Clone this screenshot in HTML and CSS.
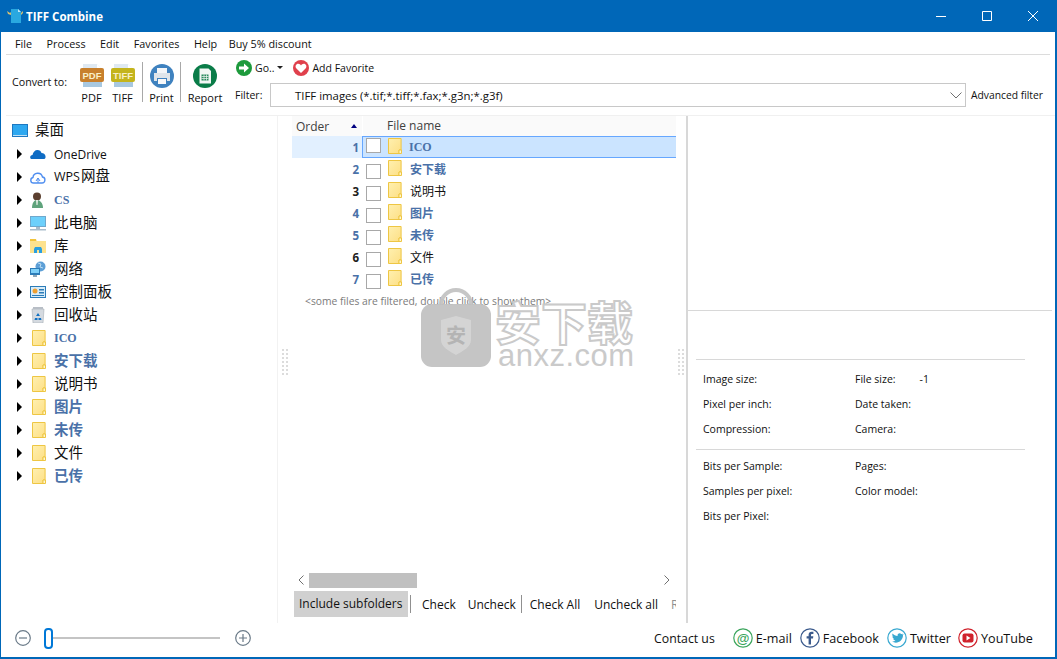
FILE: index.html
```html
<!DOCTYPE html>
<html lang="en">
<head>
<meta charset="utf-8">
<title>TIFF Combine</title>
<link rel="stylesheet" href="styles.css">
</head>
<body>
<svg class="defs" width="0" height="0" aria-hidden="true">
  <defs>
    <linearGradient id="fold" x1="0" y1="0" x2="1" y2="1"><stop offset="0" stop-color="#fff0b0"/><stop offset="1" stop-color="#fddf85"/></linearGradient>
    <symbol id="i-folder" viewBox="0 0 14 16"><path d="M.5.5h12.600v11.500h-2v3.500H.5z" fill="url(#fold)" stroke="#eec643"/><path d="M11 15.500V12h2.500v3.500z" fill="#fff6d0" stroke="#eec643"/></symbol>
    <symbol id="i-page" viewBox="0 0 24 24"><path d="M3 0h14l5 5v18H3z" fill="#dfe9f2"/><path d="M17 0l5 5h-5z" fill="#fff"/><path d="M3 18h19v5H3z" fill="#a8c8e0"/></symbol>
  </defs>
</svg>
<div class="app">
  <header class="titlebar">
    <svg class="app-icon" width="16" height="16" viewBox="0 0 16 16"><path d="M4 1h7l3 3v11H4z" fill="#29a8e0"/><path d="M0 3l3 2 1-1v3L1 6zM16 3l-2 2v2l2-2z" fill="#d8c070"/><path d="M11 1l3 3h-3z" fill="#bfe6f7"/></svg>
    <span class="app-title">TIFF Combine</span>
    <div class="win-controls">
      <svg class="win-btn" width="10" height="10" viewBox="0 0 10 10"><path d="M0 5.500h10" stroke="#fff"/></svg>
      <svg class="win-btn" width="10" height="10" viewBox="0 0 10 10"><path d="M.5.500h9v9h-9z" fill="none" stroke="#fff"/></svg>
      <svg class="win-btn" width="10" height="10" viewBox="0 0 10 10"><path d="M0 0l10 10M10 0L0 10" stroke="#fff"/></svg>
    </div>
  </header>

  <nav class="menubar">
    <span>File</span><span>Process</span><span>Edit</span><span>Favorites</span><span>Help</span><span class="menu-buy">Buy 5% discount</span>
  </nav>

  <section class="toolbar">
    <span class="convert-label">Convert to:</span>
    <div class="tool">
      <svg width="24" height="24" viewBox="0 0 24 24"><use href="#i-page"/><rect y="4" width="24" height="14" rx="2" fill="#c8802c"/><text x="12" y="14.500" class="svg-label">PDF</text></svg>
      <span>PDF</span>
    </div>
    <div class="tool">
      <svg width="24" height="24" viewBox="0 0 24 24"><use href="#i-page"/><rect y="4" width="24" height="14" rx="2" fill="#c4b41c"/><text x="12" y="14.500" class="svg-label">TIFF</text></svg>
      <span>TIFF</span>
    </div>
    <i class="vsep"></i>
    <div class="tool tool-print">
      <svg width="24" height="24" viewBox="0 0 24 24"><circle cx="12" cy="12" r="12" fill="#3f82bf"/><path d="M7 4h10v5H7z" fill="#f4f6f8"/><path d="M4 9h16v8h-3v-3H7v3H4z" fill="#dfe5ea"/><path d="M8 15h8v5H8z" fill="#f8f9fa"/></svg>
      <span>Print</span>
    </div>
    <i class="vsep"></i>
    <div class="tool tool-report">
      <svg width="24" height="24" viewBox="0 0 24 24"><circle cx="12" cy="12" r="12" fill="#0a7c48"/><path d="M6.500 4.500h9l2.500 2.500v12.500H6.500z" fill="#f2f7f4"/><path d="M8.500 10.500h7v6h-7z" fill="#2b8a5e"/><path d="M8.500 12.500h7M8.500 14.500h7M11 10.500v6M13.500 10.500v6" stroke="#f2f7f4" stroke-width=".7"/></svg>
      <span>Report</span>
    </div>
    <div class="tool-right">
      <div class="quick-row">
        <svg width="16" height="16" viewBox="0 0 16 16"><circle cx="8" cy="8" r="8" fill="#1d9a3c"/><path d="M3 6.500h5V3.500l5 4.500-5 4.500V9.500H3z" fill="#fff"/></svg>
        <span class="go-text">Go..</span>
        <i class="caret-down"></i>
        <svg class="fav-icon" width="16" height="16" viewBox="0 0 16 16"><circle cx="8" cy="8" r="8" fill="#e0404c"/><path d="M8 13L3.200 8.200C1.800 6.500 3 3.800 5.200 3.800c1.300 0 2.200.8 2.800 1.800.6-1 1.500-1.800 2.800-1.800 2.200 0 3.400 2.700 2 4.400z" fill="#fff"/></svg>
        <span>Add Favorite</span>
      </div>
      <div class="filter-row">
        <span class="filter-label">Filter:</span>
        <div class="combo">
          <span>TIFF images (*.tif;*.tiff;*.fax;*.g3n;*.g3f)</span>
          <svg width="12" height="7" viewBox="0 0 12 7"><path d="M.5.500L6 6l5.500-5.500" fill="none" stroke="#707070"/></svg>
        </div>
        <span class="adv">Advanced filter</span>
      </div>
    </div>
  </section>

  <main class="main">
    <aside class="tree">
      <div class="tree-root">
        <svg width="16" height="13" viewBox="0 0 16 13"><path d="M0 0h16v13H0z" fill="#1d78c1"/><path d="M1 1h14v10H1z" fill="#2ea8f0"/><path d="M1 11h14v1H1z" fill="#bfe0f5"/></svg>
        <span class="t-cjk">桌面</span>
      </div>
      <div class="tree-row"><i class="caret"></i>
        <svg width="16" height="16" viewBox="0 0 16 16"><path d="M1 13c-1.500-1-1-4 1.500-4C3 6 5 4 7.500 4c2 0 3.500 1 4 3 2.500 0 4.500 2 4 4.500-.2 1-1 1.500-2 1.500z" fill="#0f6cc4"/></svg>
        <span class="t-lat">OneDrive</span></div>
      <div class="tree-row"><i class="caret"></i>
        <svg width="16" height="16" viewBox="0 0 16 16"><path d="M3.500 14C0 14 0 9 3 8.500 3.500 3.500 11 2.500 12.500 8c3.500.5 3 6-.5 6z" fill="none" stroke="#4f8ef0" stroke-width="1.400"/><path d="M8 9v5M6 12l2-3 2 3" fill="none" stroke="#4f8ef0"/></svg>
        <span class="t-cjk"><b class="t-wps">WPS</b>网盘</span></div>
      <div class="tree-row"><i class="caret"></i>
        <svg width="16" height="16" viewBox="0 0 16 16"><circle cx="7" cy="4.500" r="4" fill="#5c4030"/><path d="M2 16c0-5 2-8 5-8s6 3 6 8z" fill="#5fa37c"/><path d="M6 8h2l-.5 5h-1z" fill="#e8f0e8"/></svg>
        <span class="t-serif">CS</span></div>
      <div class="tree-row"><i class="caret"></i>
        <svg width="16" height="16" viewBox="0 0 16 16"><path d="M0 1h16v11H0z" fill="#6fa8cc"/><path d="M1 2h14v9H1z" fill="#6dd0fb"/><path d="M6 12h4v2H6z" fill="#a8bccb"/><path d="M0 14h16v1.500H0z" fill="#a8bccb"/></svg>
        <span class="t-cjk">此电脑</span></div>
      <div class="tree-row"><i class="caret"></i>
        <svg width="16" height="16" viewBox="0 0 16 16"><path d="M0 1h6l1 2h9v12H0z" fill="#fde28e"/><path d="M0 1h6v2H0z" fill="#f2c43c"/><path d="M5 9h6l1 2v4H9v-3H7v3H4v-4z" fill="#2a9fe0"/></svg>
        <span class="t-cjk">库</span></div>
      <div class="tree-row"><i class="caret"></i>
        <svg width="16" height="16" viewBox="0 0 16 16"><circle cx="10.500" cy="5.500" r="5" fill="#5d9fd6"/><path d="M8 2l3 1-1 3 3 1" fill="none" stroke="#bcdcf2"/><path d="M0 7h10v7H0z" fill="#2c7cb8"/><path d="M1 8h8v4H1z" fill="#7fd0f8"/><path d="M3 14h4v2H3z" fill="#90a8b8"/></svg>
        <span class="t-cjk">网络</span></div>
      <div class="tree-row"><i class="caret"></i>
        <svg width="16" height="16" viewBox="0 0 16 16"><path d="M0 2h16v12H0z" fill="#2c7cb8"/><path d="M1 3h14v10H1z" fill="#d8ecf8"/><circle cx="5" cy="7" r="2.500" fill="#f0a030"/><path d="M9 5h5v1.500H9zM9 8h5v1.500H9zM2 11h12v1H2z" fill="#2c7cb8"/></svg>
        <span class="t-cjk">控制面板</span></div>
      <div class="tree-row"><i class="caret"></i>
        <svg width="16" height="16" viewBox="0 0 16 16"><path d="M2 2h12l-1 14H3z" fill="#d5dae0" stroke="#a8aeb6" stroke-width=".6"/><path d="M3 0h10v2H3z" fill="#b8bec6"/><path d="M8 6l2 3H6zM5 11h2.500v2H4.500zM11 11H8.500v2h3z" fill="#1272c4"/></svg>
        <span class="t-cjk">回收站</span></div>
      <div class="tree-row"><i class="caret"></i><svg class="fold" width="14" height="16"><use href="#i-folder"/></svg><span class="t-serif">ICO</span></div>
      <div class="tree-row"><i class="caret"></i><svg class="fold" width="14" height="16"><use href="#i-folder"/></svg><span class="t-cjk t-bold">安下载</span></div>
      <div class="tree-row"><i class="caret"></i><svg class="fold" width="14" height="16"><use href="#i-folder"/></svg><span class="t-cjk">说明书</span></div>
      <div class="tree-row"><i class="caret"></i><svg class="fold" width="14" height="16"><use href="#i-folder"/></svg><span class="t-cjk t-bold">图片</span></div>
      <div class="tree-row"><i class="caret"></i><svg class="fold" width="14" height="16"><use href="#i-folder"/></svg><span class="t-cjk t-bold">未传</span></div>
      <div class="tree-row"><i class="caret"></i><svg class="fold" width="14" height="16"><use href="#i-folder"/></svg><span class="t-cjk">文件</span></div>
      <div class="tree-row"><i class="caret"></i><svg class="fold" width="14" height="16"><use href="#i-folder"/></svg><span class="t-cjk t-bold">已传</span></div>
    </aside>

    <div class="splitter"><i></i></div>

    <section class="list">
      <div class="list-head">
        <div class="head-order"><span>Order</span><i class="sort-up"></i></div>
        <div class="head-name">File name</div>
      </div>
      <div class="list-body">
        <div class="file-row selected">
          <div class="num blue">1</div>
          <div class="cell"><i class="check"></i><svg class="fold" width="14" height="16"><use href="#i-folder"/></svg><span class="name-serif">ICO</span></div>
        </div>
        <div class="file-row"><div class="num blue">2</div><div class="cell"><i class="check"></i><svg class="fold" width="14" height="16"><use href="#i-folder"/></svg><span class="name blue">安下载</span></div></div>
        <div class="file-row"><div class="num">3</div><div class="cell"><i class="check"></i><svg class="fold" width="14" height="16"><use href="#i-folder"/></svg><span class="name plain">说明书</span></div></div>
        <div class="file-row"><div class="num blue">4</div><div class="cell"><i class="check"></i><svg class="fold" width="14" height="16"><use href="#i-folder"/></svg><span class="name blue">图片</span></div></div>
        <div class="file-row"><div class="num blue">5</div><div class="cell"><i class="check"></i><svg class="fold" width="14" height="16"><use href="#i-folder"/></svg><span class="name blue">未传</span></div></div>
        <div class="file-row"><div class="num">6</div><div class="cell"><i class="check"></i><svg class="fold" width="14" height="16"><use href="#i-folder"/></svg><span class="name plain">文件</span></div></div>
        <div class="file-row"><div class="num blue">7</div><div class="cell"><i class="check"></i><svg class="fold" width="14" height="16"><use href="#i-folder"/></svg><span class="name blue">已传</span></div></div>
        <p class="note">&lt;some files are filtered, double click to show them&gt;</p>
      </div>
      <div class="hscroll">
        <svg width="6" height="10" viewBox="0 0 6 10"><path d="M5.500.5L1 5l4.500 4.500" fill="none" stroke="#707070"/></svg>
        <div class="thumb"></div>
        <svg class="arrow-r" width="6" height="10" viewBox="0 0 6 10"><path d="M.5.500L5 5 .5 9.500" fill="none" stroke="#707070"/></svg>
      </div>
      <div class="list-tools">
        <span class="toggle">Include subfolders</span>
        <i class="tsep"></i>
        <span class="lt-check">Check</span>
        <span class="lt-uncheck">Uncheck</span>
        <i class="tsep"></i>
        <span class="lt-all">Check All</span>
        <span class="lt-unall">Uncheck all</span>
        <span class="lt-cut">Refresh</span>
      </div>
    </section>

    <div class="splitter splitter-right"><i></i></div>

    <aside class="details">
      <div class="preview"></div>
      <div class="info">
        <div class="info-grid info-a">
          <span>Image size:</span><span>File size:<b class="val">-1</b></span>
          <span>Pixel per inch:</span><span>Date taken:</span>
          <span>Compression:</span><span>Camera:</span>
        </div>
        <div class="info-grid info-b">
          <span>Bits per Sample:</span><span>Pages:</span>
          <span>Samples per pixel:</span><span>Color model:</span>
          <span>Bits per Pixel:</span><span></span>
        </div>
      </div>
    </aside>
  </main>

  <footer class="footer">
    <svg class="zoom-minus" width="16" height="16" viewBox="0 0 16 16"><circle cx="8" cy="8" r="7.300" fill="none" stroke="#6a7a88" stroke-width="1.200"/><path d="M4 8h8" stroke="#6a7a88" stroke-width="1.200"/></svg>
    <div class="slider"><i class="knob"></i></div>
    <svg class="zoom-plus" width="16" height="16" viewBox="0 0 16 16"><circle cx="8" cy="8" r="7.300" fill="none" stroke="#6a7a88" stroke-width="1.200"/><path d="M4 8h8M8 4v8" stroke="#6a7a88" stroke-width="1.200"/></svg>
    <span class="contact">Contact us</span>
    <svg class="soc soc-mail" width="20" height="20" viewBox="0 0 20 20"><circle cx="10" cy="10" r="9.200" fill="#fff" stroke="#3ba55c" stroke-width="1.200"/><text x="10" y="14.500" class="svg-at">@</text></svg>
    <span class="soc-text t-mail">E-mail</span>
    <svg class="soc" width="20" height="20" viewBox="0 0 20 20"><circle cx="10" cy="10" r="9.200" fill="#fff" stroke="#3b5a8c" stroke-width="1.200"/><path d="M11 16.500V10.500h2l.3-2.300H11V7c0-.7.2-1.100 1.200-1.100h1.200V3.800c-.3 0-1-.1-1.800-.1-1.800 0-3 1.100-3 3.100v1.400H6.600v2.300h2v6z" fill="#3b5a8c"/></svg>
    <span class="soc-text t-fb">Facebook</span>
    <svg class="soc" width="20" height="20" viewBox="0 0 20 20"><circle cx="10" cy="10" r="9.200" fill="#fff" stroke="#38a8d0" stroke-width="1.200"/><path d="M16 6.300c-.5.200-.9.300-1.400.4.500-.3.900-.8 1.100-1.300-.5.300-1 .5-1.500.6-1.400-1.500-4.100-.3-3.600 1.900-2-.1-3.800-1-5-2.500-.6 1.100-.3 2.500.8 3.200-.4 0-.8-.1-1.100-.3 0 1.200.8 2.200 2 2.500-.4.100-.7.100-1.100 0 .3 1 1.200 1.700 2.300 1.700-1 .8-2.300 1.200-3.500 1 4.800 3 11.200-.2 11-6.700.4-.1.700-.3 1-.5z" fill="#38a8d0"/></svg>
    <span class="soc-text t-tw">Twitter</span>
    <svg class="soc" width="20" height="20" viewBox="0 0 20 20"><circle cx="10" cy="10" r="9.200" fill="#fff" stroke="#d0222c" stroke-width="1.200"/><rect x="4.500" y="5.500" width="11" height="9" rx="2" fill="#d0222c"/><path d="M8.500 7.500v5l4-2.500z" fill="#fff"/></svg>
    <span class="soc-text">YouTube</span>
  </footer>

  <div class="watermark" aria-hidden="true">
    <svg width="72" height="80" viewBox="0 0 72 80"><path d="M21 20V17a15 15 0 0 1 30 0v3" fill="none" stroke="#c4c4c4" stroke-width="4"/><rect x="1" y="16" width="70" height="63" rx="11" fill="#c2c2c2"/><path d="M21 32l15-4 15 4v20c0 7-8 11-15 15-7-4-15-8-15-15z" fill="#d2d2d2"/><text x="36" y="55" class="wm-shield">安</text></svg>
    <div class="wm-text">
      <span class="wm-cjk">安下载</span>
      <span class="wm-lat">anxz.com</span>
    </div>
  </div>
</div>
</body>
</html>
```

FILE: styles.css
```css
* { box-sizing: border-box; }
html, body { margin: 0; padding: 0; height: 100%; overflow: hidden; }
body { font-family: "Open Sans", "Noto Sans CJK SC", sans-serif; font-size: 12px; color: #101010; background: #fff; }
i { display: block; font-style: normal; }
svg { display: block; flex: none; }
.defs { position: absolute; }

.app { position: relative; width: 1057px; height: 659px; display: flex; flex-direction: column; border: solid #0067b8; border-width: 0 2px 2px 1px; background: #fff; }

.titlebar { height: 32px; flex: none; margin: 0 -2px 0 -1px; padding-left: 7px; background: #0067b8; color: #fff; display: flex; align-items: center; }
.app-title { margin-left: 3px; font-weight: 700; font-size: 11.500px; }
.win-controls { margin-left: auto; display: flex; gap: 36px; padding-right: 19px; }

.menubar { height: 23px; flex: none; margin: 0 5px; padding-left: 9px; display: flex; align-items: center; gap: 14.500px; font-size: 10.800px; border-bottom: 1px solid #dcdcdc; }
.menu-buy { margin-left: -3px; }

.toolbar { height: 61px; flex: none; display: flex; border-bottom: 1px solid #f0f0f0; margin-left: 5px; padding-left: 6px; }
.convert-label { width: 64px; align-self: center; font-size: 10.700px; margin-bottom: 7px; }
.tool { width: 31px; display: flex; flex-direction: column; align-items: center; padding-top: 9px; font-size: 11px; gap: 2px; }
.tool-print { margin-left: 1px; width: 29px; }
.tool-report { margin-left: 2px; width: 38px; }
.svg-label { font: 700 9.500px "Liberation Sans", sans-serif; fill: #f8efc8; text-anchor: middle; }
.vsep { width: 1px; height: 40px; background: #a8a8a8; margin: 7px 3px 0 4px; }
.tool-right { flex: 1; margin-left: 11px; display: flex; flex-direction: column; min-width: 0; font-size: 10.500px; }
.quick-row { height: 28px; display: flex; align-items: center; padding: 0 0 3px 1px; }
.go-text { margin-left: 3px; }
.caret-down { width: 0; height: 0; margin-left: 3px; border: 3px solid transparent; border-top: 3px solid #202020; border-bottom: 0; }
.fav-icon { margin: 0 3px 0 10px; }
.filter-row { display: flex; align-items: center; }
.filter-label { width: 35px; }
.combo { width: 696px; height: 24px; border: 1px solid #c8c8c8; display: flex; align-items: center; justify-content: space-between; padding: 0 3px 0 24px; font-size: 11.400px; }
.adv { margin-left: 5px; white-space: nowrap; font-size: 10.300px; }

.main { flex: 1; min-height: 0; display: flex; }

.tree { width: 277px; flex: none; padding: 2px 0 0 11px; border-right: 1px solid #f2f2f2; }
.tree-root { height: 24px; display: flex; align-items: center; gap: 7px; }
.tree-row { height: 23px; display: flex; align-items: center; padding-left: 5px; }
.caret { width: 0; height: 0; border-left: 5px solid #000; border-top: 5px solid transparent; border-bottom: 5px solid transparent; margin-right: 8px; }
.tree-row svg { margin-right: 8px; }
.tree-row .fold { margin: 0 8px 0 2px; }
.t-cjk { font-size: 14.500px; line-height: 20px; }
.t-lat { font-size: 12px; padding-top: 2px; }
.t-wps { font-size: 12.500px; font-weight: 400; margin-right: 1px; }
.t-serif { font: 700 12px "Liberation Serif", serif; color: #4a71a8; padding-top: 2px; }
.t-bold { font-weight: 700; color: #4a71a8; }

.splitter { width: 14px; flex: none; display: flex; align-items: center; justify-content: center; padding-bottom: 15px; }
.splitter i { width: 6px; height: 26px; border-left: 2px dotted #dcdcdc; border-right: 2px dotted #dcdcdc; }
.splitter-right { width: 10px; }

.list { width: 384px; flex: none; display: flex; flex-direction: column; overflow: hidden; }
.list-head { height: 20px; flex: none; display: flex; align-items: center; color: #404040; }
.head-order { width: 70px; height: 100%; display: flex; align-items: center; padding: 0 5px 0 4px; justify-content: space-between; background: #fafafa; }
.sort-up { width: 0; height: 0; border: 3.500px solid transparent; border-bottom: 4px solid #000080; border-top: 0; }
.head-name { flex: 1; height: 100%; padding-left: 24px; background: #fafafa; margin-left: 1px; line-height: 20px; }
.list-body { flex: 1; min-height: 0; }

.file-row { height: 22px; display: flex; }
.num { width: 70px; flex: none; padding: 0 3px 0 0; text-align: right; font: 700 11.500px/24px "Open Sans", sans-serif; color: #202020; }
.blue { color: #4a71a8; }
.cell { flex: 1; display: flex; align-items: flex-start; padding: 2px 0 0 3px; border: 1px solid transparent; border-width: 0 0 0 1px; }
.check { width: 15px; height: 15px; margin-top: 4px; border: 1px solid #a8a8a8; background: #fff; }
.cell .fold { margin: 0 8px 0 7px; }
.name { font-size: 12px; line-height: 20px; font-weight: 700; }
.name.plain { font-weight: 400; color: #101010; }
.name-serif { font: 700 12px/18px "Liberation Serif", serif; color: #4a71a8; margin-left: -1px; }
.selected .num { background: #e2f0ff; }
.selected .cell { background: #cbe4ff; border: 1px solid #66a7ff; border-right: 0; padding-top: 1px; padding-left: 3px; }
.selected .check { margin-top: 0; }
.note { margin: 4px 0 0 13px; font-size: 10.300px; color: #7a7a7a; }

.hscroll { height: 18px; flex: none; display: flex; align-items: center; padding: 0 6px; margin-bottom: 2px; }
.thumb { width: 108px; height: 15px; margin-left: 5px; background: #c0c0c0; }
.arrow-r { margin-left: auto; }
.list-tools { height: 26px; flex: none; margin-bottom: 6px; display: flex; align-items: center; white-space: nowrap; padding-left: 2px; }
.toggle { height: 26px; line-height: 26px; padding: 0 5px; background: #d0d0d0; flex: none; width: 114px; }
.tsep { width: 1px; height: 18px; background: #909090; flex: none; }
.list-tools > .tsep:nth-child(2) { margin-left: 2px; }
.lt-check { margin-left: 11px; }
.lt-uncheck { margin-left: 12px; margin-right: 5px; }
.lt-all { margin-left: 8px; }
.lt-unall { margin-left: 14px; }
.lt-cut { margin-left: 13px; color: #909090; }

.details { flex: 1; min-width: 0; border-left: 2px solid #d8d8d8; display: flex; flex-direction: column; }
.preview { height: 195px; flex: none; border-bottom: 1px solid #d8d8d8; margin-right: 3px; }
.info { margin: 48px 0 0 8px; width: 329px; font-size: 10.500px; }
.info-grid { display: grid; grid-template-columns: 152px 1fr; grid-auto-rows: 25px; align-items: center; padding-left: 7px; border-top: 1px solid #d8d8d8; }
.info-a { padding-top: 6px; padding-bottom: 8px; }
.info-b { padding-top: 3px; }
.val { font-weight: 400; margin-left: 24px; }

.footer { height: 34px; flex: none; display: flex; align-items: center; padding: 0 0 4px 14px; }
.slider { width: 176px; margin-left: 13px; height: 21px; position: relative; display: flex; align-items: center; }
.slider::before { content: ""; flex: 1; height: 2px; background: #c4c4c4; }
.knob { position: absolute; left: 0; top: 0; width: 9px; height: 21px; border: 2px solid #0078d7; border-radius: 4px; background: #fff; }
.zoom-plus { margin-left: 15px; }
.contact { margin-left: 403px; font-size: 12.300px; }
.soc-mail { margin-left: 18px; }
.soc-text { margin-left: 3px; margin-right: 8px; font-size: 12.600px; }
.t-tw { margin-right: 7px; }
.svg-at { font: 700 13px "Liberation Sans", sans-serif; fill: #3ba55c; text-anchor: middle; }

.watermark { position: absolute; left: 419px; top: 288px; display: flex; gap: 3px; opacity: .95; pointer-events: none; }
.wm-text { display: flex; flex-direction: column; align-items: flex-start; margin-top: 9px; }
.wm-cjk { font: 700 46px/46px "Noto Sans CJK SC", sans-serif; color: #fff; -webkit-text-stroke: 2px #c8c8c8; white-space: nowrap; }
.wm-lat { font: 400 31px/26px "Liberation Sans", sans-serif; color: #c8c8c8; margin-left: 3px; letter-spacing: .5px; }
.wm-shield { font: 700 20px "Noto Sans CJK SC", sans-serif; fill: #b0b0b0; text-anchor: middle; }
```
